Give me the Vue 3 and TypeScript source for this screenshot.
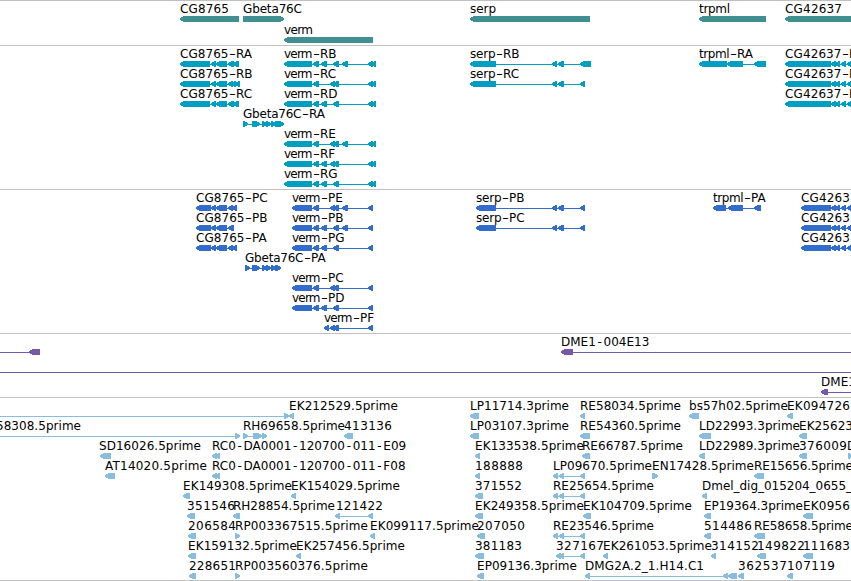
<script setup lang="ts">
type Block = [number, number];

interface Feature {
  row: number;
  name?: string;
  // label start and end on the x axis
  label?: Block;
  blocks: Block[];
  forward?: boolean;
  // connector line, when it runs past the blocks
  line?: Block;
}

interface Track {
  id: string;
  color: string;
  height: number;
  pitch: number;
  features: Feature[];
}

const BAR_TOP = 15;
const BASELINE = 12;
const BAR_HEIGHT = 6;
const HEAD = 4;

function f(row: number, name: string, label: Block, blocks: Block[], forward = false, line?: Block): Feature {
  return { row, name, label, blocks, forward, line };
}

const genes: Feature[] = [
  f(0, 'CG8765', [180, 229], [[180, 239]]),
  f(0, 'Gbeta76C', [243, 302], [[243, 284]], true),
  f(1, 'verm', [284, 313], [[284, 373]]),
  f(0, 'serp', [470, 496], [[470, 590]]),
  f(0, 'trpml', [699, 730], [[699, 766]]),
  f(0, 'CG42637', [785, 842], [[785, 870]])
];

// exons shared between isoforms
const cg: Block[] = [[211, 216], [216, 227]];
const cgTail: Block[] = [[831, 836], [835, 840], [841, 846], [847, 856]];
const gbeta: Block[] = [[252, 260], [262, 267], [266, 271], [271, 276]];
const a: Block = [313, 319];
const b: Block = [321, 327];
const c: Block = [330, 335];
const d: Block = [333, 339];
const e: Block = [342, 348];
const utr: Block = [284, 312];
const cds: Block = [292, 312];
const end: Block[] = [[368, 373], [371, 376]];
const stop: Block = [368, 373];
const serp: Block[] = [[552, 557], [558, 564]];

const transcripts: Feature[] = [
  f(0, 'CG8765-RA', [180, 253], [[180, 210], ...cg, [228, 234], [233, 239]]),
  f(1, 'CG8765-RB', [180, 251], [[180, 210], ...cg, [228, 233], [231, 236], [235, 240]]),
  f(2, 'CG8765-RC', [180, 252], [[180, 210], ...cg, [228, 234], [233, 239]]),
  f(3, 'Gbeta76C-RA', [243, 326], [[243, 248], ...gbeta, [275, 284]], true),
  f(0, 'verm-RB', [284, 335], [utr, a, b, d, e, ...end]),
  f(1, 'verm-RC', [284, 336], [utr, a, c, d, ...end]),
  f(2, 'verm-RD', [284, 337], [utr, a, b, d, ...end]),
  f(4, 'verm-RE', [284, 336], [utr, a, c, d, e, ...end]),
  f(5, 'verm-RF', [284, 334], [utr, a, b, c, d, ...end]),
  f(6, 'verm-RG', [284, 337], [utr, a, b, d, ...end]),
  f(0, 'serp-RB', [470, 518], [[470, 496], ...serp, [580, 591]]),
  f(1, 'serp-RC', [470, 519], [[470, 496], ...serp, [580, 585]]),
  f(0, 'trpml-RA', [699, 754], [[699, 727], [727, 743], [754, 766]]),
  f(0, 'CG42637-RA', [785, 866], [[785, 831], ...cgTail]),
  f(1, 'CG42637-RB', [785, 865], [[785, 831], ...cgTail]),
  f(2, 'CG42637-RC', [785, 866], [[785, 831], ...cgTail])
];

const proteins: Feature[] = [
  f(0, 'CG8765-PC', [196, 267], [[196, 211], ...cg, [228, 233], [232, 237]]),
  f(1, 'CG8765-PB', [196, 266], [[196, 211], ...cg, [228, 234]]),
  f(2, 'CG8765-PA', [196, 268], [[196, 211], ...cg, [228, 233], [232, 237]]),
  f(3, 'Gbeta76C-PA', [245, 327], [[245, 250], ...gbeta, [275, 281]], true),
  f(0, 'verm-PE', [292, 342], [cds, a, c, d, e, stop]),
  f(1, 'verm-PB', [292, 342], [cds, a, b, d, e, stop]),
  f(2, 'verm-PG', [292, 344], [cds, a, b, d, stop]),
  f(4, 'verm-PC', [292, 343], [cds, a, c, d, stop]),
  f(5, 'verm-PD', [292, 344], [cds, a, b, d, stop]),
  f(6, 'verm-PF', [324, 373], [[324, 329], c, d, stop]),
  f(0, 'serp-PB', [476, 523], [[476, 496], ...serp, [580, 585]]),
  f(1, 'serp-PC', [476, 524], [[476, 496], ...serp, [580, 585]]),
  f(0, 'trpml-PA', [713, 767], [[713, 726], [728, 743], [754, 761]]),
  f(0, 'CG4263', [801, 850], [[801, 831], ...cgTail]),
  f(1, 'CG4263', [801, 850], [[801, 831], ...cgTail]),
  f(2, 'CG4263', [801, 850], [[801, 831], ...cgTail])
];

const insertions: Feature[] = [
  { row: 0, blocks: [[29, 40]], line: [-10, 40] },
  f(0, 'DME1-004E13', [561, 648], [[561, 573]], false, [561, 870]),
  { row: 1, blocks: [], line: [-10, 870] },
  f(2, 'DME1', [821, 856], [[821, 828]], false, [821, 870])
];

const re: Block[] = [[553, 558], [559, 564], [580, 585]];

const ests: Feature[] = [
  { row: 0, blocks: [[284, 289]], forward: true, line: [-10, 289] },
  f(0, 'EK212529.5prime', [289, 398], [[289, 294]]),
  f(0, 'LP11714.3prime', [470, 569], [[470, 479]]),
  f(0, 'RE58034.5prime', [580, 681], [[580, 585]]),
  f(0, 'bs57h02.5prime', [689, 788], [[689, 699]]),
  f(0, 'EK094726', [787, 850], [[787, 793]]),

  f(1, '58308.5prime', [-4, 81], [[235, 240]], true, [-10, 240]),
  f(1, 'RH69658.5prime', [243, 345], [[243, 248], [253, 262], [262, 267]], true),
  f(1, '413136', [344, 392], [[344, 353]]),
  f(1, 'LP03107.3prime', [470, 569], [[470, 479]]),
  f(1, 'RE54360.5prime', [580, 681], [[580, 590]]),
  f(1, 'LD22993.3prime', [699, 800], [[699, 711]]),
  f(1, 'EK25623', [799, 853], [[799, 807]]),

  f(2, 'SD16026.5prime', [99, 201], [[100, 111]]),
  f(2, 'RC0-DA0001-120700-011-E09', [212, 408], [[212, 217], [215, 220]]),
  f(2, 'EK133538.5prime', [475, 584], [[475, 480]]),
  f(2, 'RE66787.5prime', [582, 683], [[582, 590]]),
  f(2, 'LD22989.3prime', [699, 800], [[699, 705]]),
  f(2, '376009', [799, 847], [[799, 807]]),
  f(2, 'D', [847, 856], [[848, 853]], true),

  f(3, 'AT14020.5prime', [105, 207], [[105, 115]]),
  f(3, 'RC0-DA0001-120700-011-F08', [212, 407], [[212, 217], [215, 220]]),
  f(3, '188888', [475, 523], [[475, 480]]),
  f(3, 'LP09670.5prime', [553, 652], re),
  f(3, 'EN17428.5prime', [652, 754], [[652, 658]], true),
  f(3, 'RE15656.5prime', [754, 853], [[754, 764]]),

  f(4, 'EK149308.5prime', [183, 292], [[183, 190]]),
  f(4, 'EK154029.5prime', [291, 400], [[291, 296]]),
  f(4, '371552', [475, 522], [[475, 483]]),
  f(4, 'RE25654.5prime', [553, 654], re),
  f(4, 'Dmel_dig_015204_0655_', [702, 852], [[702, 707]]),

  f(5, '351546', [187, 235], [[187, 195]]),
  f(5, 'RH28854.5prime', [233, 335], [[233, 238], [235, 240]]),
  f(5, '121422', [336, 383], [[335, 340], [368, 373]]),
  f(5, 'EK249358.5prime', [475, 584], [[475, 483]]),
  f(5, 'EK104709.5prime', [583, 692], [[583, 591]]),
  f(5, 'EP19364.3prime', [704, 803], [[704, 711]]),
  f(5, 'EK0956', [803, 850], [[803, 813]]),

  f(6, '206584', [188, 236], [[188, 196]]),
  f(6, 'RP003367515.5prime', [235, 368], [[235, 240]], true),
  f(6, 'EK099117.5prime', [370, 479], [[370, 375]]),
  f(6, '207050', [477, 525], [[477, 485]]),
  f(6, 'RE23546.5prime', [553, 654], re),
  f(6, '514486', [704, 752], [[704, 711]]),
  f(6, 'RE58658.5prime', [754, 853], [[754, 765]]),

  f(7, 'EK159132.5prime', [188, 297], [[188, 196]]),
  f(7, 'EK257456.5prime', [296, 405], [[296, 301]]),
  f(7, '381183', [475, 522], [[475, 484]]),
  f(7, '327167', [556, 604], [[556, 561], [559, 564], [580, 585]]),
  f(7, 'EK261053.5prime', [603, 712], [[603, 608]]),
  f(7, '314152', [711, 759], [[711, 716]]),
  f(7, '149822', [757, 805], [[757, 766]]),
  f(7, '111683', [803, 850], [[803, 813]]),

  f(8, '228651', [189, 236], [[189, 196]]),
  f(8, 'RP003560376.5prime', [235, 368], [[235, 240]], true),
  f(8, 'EP09136.3prime', [477, 577], [[477, 484]]),
  f(8, 'DMG2A.2_1.H14.C1', [585, 704], [[585, 590], [723, 728], [728, 737]]),
  f(8, '362537', [738, 787], [[738, 744]]),
  f(8, '107119', [787, 835], [[787, 793]])
];

const tracks: Track[] = [
  { id: 'genes', color: '#408f91', height: 44, pitch: 21, features: genes },
  { id: 'transcripts', color: '#009fc1', height: 143, pitch: 20, features: transcripts },
  { id: 'proteins', color: '#326dcd', height: 143, pitch: 20, features: proteins },
  { id: 'insertions', color: '#7558a8', height: 63, pitch: 20, features: insertions },
  { id: 'ests', color: '#88bddd', height: 182, pitch: 20, features: ests }
];

// box with an arrow head pointing along the strand
function arrow([start, stop]: Block, forward?: boolean) {
  const w = Math.min(HEAD, stop - start);
  const tip = forward ? stop : start;
  const back = forward ? start : stop;
  const s = forward ? -1 : 1;
  const h = BAR_HEIGHT;
  return `M${back},0 H${tip + s * w} L${tip + s * 2},1 L${tip},2 V4 L${tip + s * 2},5 L${tip + s * w},${h} H${back} Z`;
}

function connector(feature: Feature): Block | null {
  if (feature.line) {
    return feature.line;
  }
  if (feature.blocks.length < 2) {
    return null;
  }
  return [feature.blocks[0][0], feature.blocks[feature.blocks.length - 1][1]];
}

const geneWidths: Record<string, number> = {};
for (const gene of genes) {
  geneWidths[gene.name!] = gene.label![1] - gene.label![0];
}

interface Part {
  text: string;
  x: number;
  length?: number;
  dx?: string;
}

// isoform labels keep the gene name as wide as in the gene track
function parts(feature: Feature): Part[] {
  const name = feature.name!;
  const [x, right] = feature.label!;
  const [head, tail] = name.split('-');
  const width = geneWidths[head];

  if (tail && width) {
    return [
      { text: head, x, length: width - 0.5 },
      { text: '-', x: x + width, length: 7 },
      { text: tail, x: x + width + 7 }
    ];
  }
  if (tail) {
    // hyphens get some air on both sides
    const dx = [...name].map((ch, i) => (ch === '-' || name[i - 1] === '-' ? 1.7 : 0)).join(' ');
    return [{ text: name, x, dx }];
  }
  return [{ text: name, x, length: right - x }];
}
</script>

<template>
  <main class="browser">
    <section v-for="track in tracks" :key="track.id" class="track">
      <svg width="851" :height="track.height">
        <g
          v-for="(feature, i) in track.features"
          :key="i"
          :transform="`translate(0 ${feature.row * track.pitch})`"
        >
          <g class="glyph" :transform="`translate(0 ${BAR_TOP})`" :fill="track.color">
            <rect
              v-if="connector(feature)"
              :x="connector(feature)![0]"
              y="3"
              :width="connector(feature)![1] - connector(feature)![0]"
              height="1"
            />
            <path v-for="(block, j) in feature.blocks" :key="j" :d="arrow(block, feature.forward)" />
          </g>
          <text v-if="feature.name" class="label" :y="BASELINE">
            <tspan
              v-for="(part, k) in parts(feature)"
              :key="k"
              :x="part.x"
              :dx="part.dx"
              :textLength="part.length"
              :lengthAdjust="part.text === '-' ? 'spacingAndGlyphs' : 'spacing'"
            >{{ part.text }}</tspan>
          </text>
        </g>
      </svg>
    </section>
  </main>
</template>

<style>
body {
  background: white;
}
</style>

<style scoped>
.browser {
  width: 851px;
  height: 581px;
  box-sizing: border-box;
  overflow: hidden;
  background: white;
  border-bottom: 1px solid #c0c0c0;
}

.track {
  border-top: 1px solid #c0c0c0;
}

svg {
  display: block;
  overflow: hidden;
}

.glyph {
  shape-rendering: crispEdges;
}

.label {
  font-family: 'DejaVu Sans', sans-serif;
  font-size: 12px;
  fill: black;
}
</style>
